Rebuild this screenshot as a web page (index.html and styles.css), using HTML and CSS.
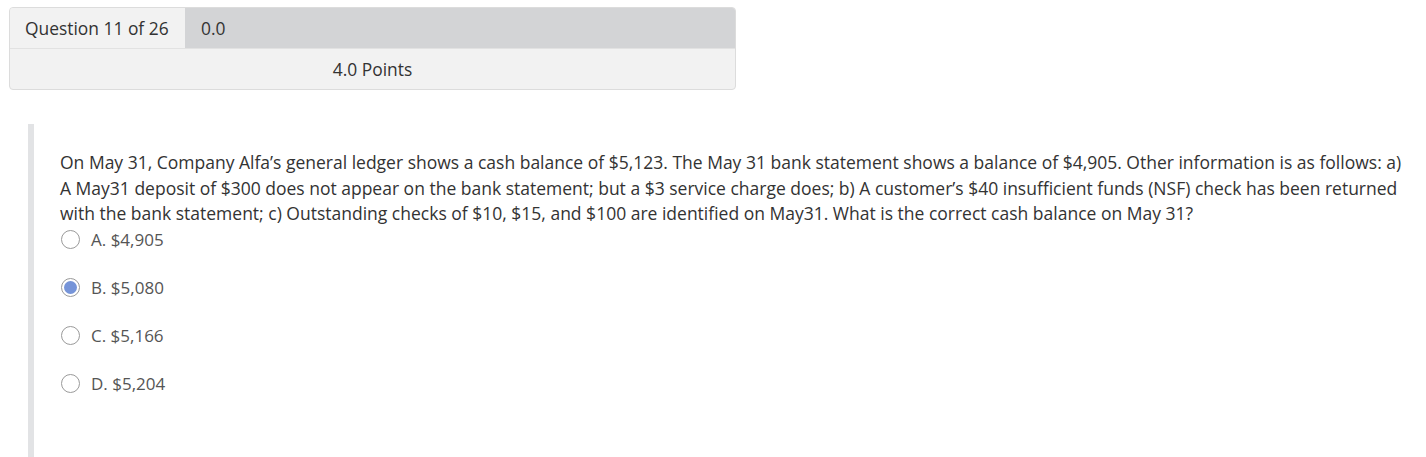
FILE: index.html
```html
<!DOCTYPE html>
<html>
<head>
<meta charset="utf-8">
<link rel="stylesheet" href="styles.css">
</head>
<body>
<div class="header">
  <div class="row-top">
    <div class="qnum">Question 11 of 26</div>
    <div class="score">0.0</div>
  </div>
  <div class="points">4.0 Points</div>
</div>
<div class="question">
  <p class="stem">On May 31, Company Alfa’s general ledger shows a cash balance of $5,123. The May 31 bank statement shows a balance of $4,905. Other information is as follows: a) A May31 deposit of $300 does not appear on the bank statement; but a $3 service charge does; b) A customer’s $40 insufficient funds (NSF) check has been returned with the bank statement; c) Outstanding checks of $10, $15, and $100 are identified on May31. What is the correct cash balance on May 31?</p>
  <ul class="options">
    <li class="option"><span class="radio"></span><span class="label">A. $4,905</span></li>
    <li class="option"><span class="radio checked"></span><span class="label">B. $5,080</span></li>
    <li class="option"><span class="radio"></span><span class="label">C. $5,166</span></li>
    <li class="option"><span class="radio"></span><span class="label">D. $5,204</span></li>
  </ul>
</div>
</body>
</html>
```

FILE: styles.css
```css
html, body {
  margin: 0;
  padding: 0;
  background: #fff;
  font-family: "Open Sans", "Noto Sans", sans-serif;
  color: #333;
}
body {
  padding: 7px 0 0 9px;
}
.header {
  width: 725px;
  border: 1px solid #dcdcdc;
  border-radius: 4px;
  background: #f2f2f2;
  overflow: hidden;
  font-size: 17.4px;
}
.row-top {
  display: flex;
  height: 40px;
  border-bottom: 1px solid #e2e2e2;
}
.qnum {
  width: 175px;
  box-sizing: border-box;
  padding-left: 15px;
  display: flex;
  align-items: center;
  background: #f2f2f2;
}
.score {
  flex: 1;
  padding-left: 16px;
  display: flex;
  align-items: center;
  background: #d3d4d6;
}
.points {
  height: 40px;
  display: flex;
  align-items: center;
  justify-content: center;
}
.question {
  margin: 34px 0 0 19px;
  border-left: 6px solid #e2e3e5;
  padding: 26px 0 40px 26px;
  height: 267px;
}
.stem {
  margin: 0;
  max-width: 1350px;
  font-size: 17.5px;
  line-height: 25.6px;
}
.options {
  list-style: none;
  margin: 0;
  padding: 0;
}
.option {
  display: flex;
  align-items: center;
  height: 26px;
  margin-bottom: 22px;
  font-size: 17px;
  color: #555;
}
.radio {
  width: 17px;
  height: 17px;
  border: 1px solid #9a9a9a;
  border-radius: 50%;
  margin-left: 1px;
  margin-right: 11px;
  box-sizing: content-box;
  position: relative;
  background: #fff;
}
.radio.checked::after {
  content: "";
  position: absolute;
  left: 2px;
  top: 2px;
  width: 13px;
  height: 13px;
  border-radius: 50%;
  background: #7694d8;
}
```
